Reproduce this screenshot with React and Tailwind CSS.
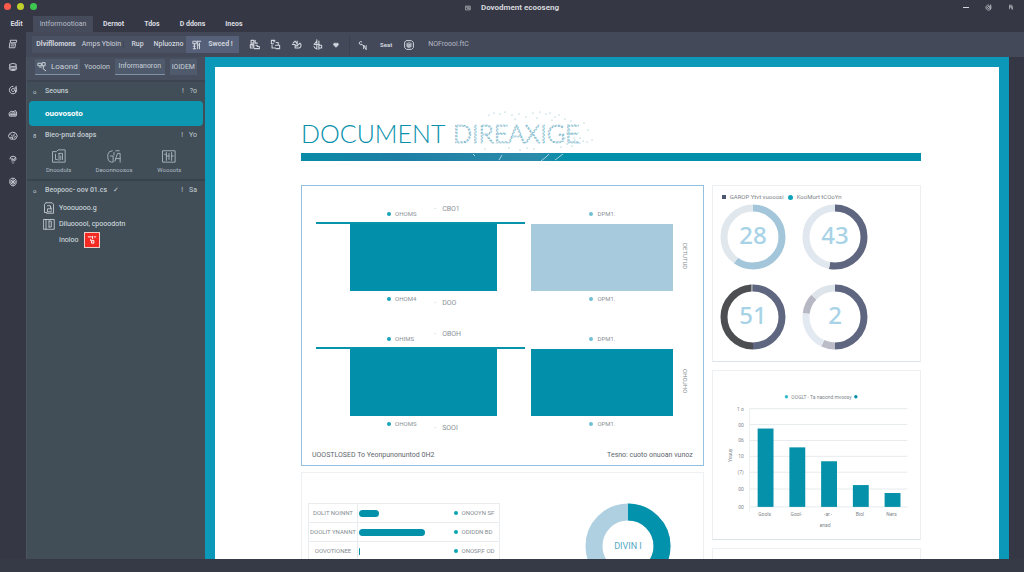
import React from "react";
import { Heart } from "lucide-react";

const menus = ["Dernot", "Tdos", "D ddons", "Ineos"];

// every glyph is drawn on a 16 x 16 grid
const glyphs = {
  notes: "M4 2h10l-1 4H5zM3 6l-1 8h9l1-6M5 8h6M5 11h4",
  data: "M3 3.500q5-2.500 10 0v3q-5 2-10 0zM3 7v5.500q5 2.500 10 0V7M2 9.500h12M6 12h5",
  target: "M8 2a6 6 0 1 0 5 2.500M13 2v3h-3M8 5.500a2.500 2.500 0 1 0 .1 0M12 8v4",
  media: "M2 8l3-3 3 1 4-2 2 4-1 5H3zM5 8v4M8 7v5M11 7v5M3 10h10",
  palette: "M3 4l4-2 5 1 3 5-3 5H4L1 9zM5 6l2 2M10 5l-1 3M4 10h3M10 10l2-1M7 12v-2",
  places: "M3 8a5 4.500 0 1 1 10 0q-1 3-4 3H6M6 7h1M10 7h1M6 9h4M7 14l1 1 1-1",
  settings: "M6 2h4l3 3v5l-3 4H6L3 10V5zM5 5l6 6M11 5l-6 6M8 3v10M4 8h8",
  frame: "M2 2h5v4H2zM9 2h5M9 2v12M12 5v9M4 6v8M2 10h3M2 14h4M9 8h3",
  shapes: "M3 2h4v4H3zM9 2v4h3M2 8h5v5H2zM4 10h2M10 9h2v2h3v3h-5M8 14h1",
  folder: "M2 2h5M2 2v5h3M3 9v4h5M9 5h3v3M8 9h6v5H9M5 4h2",
  camera: "M3 6l3-3 2 3M2 8h4v5h6a4 4 0 0 0 1-7l-2 2M9 3v6M6 10h4",
  anchor: "M7 1v14M7 3L3 8h8M10 3v6h4v4h-4M3 11q1 3 4 3M10 9v6",
  connect: "M6 3a2.500 2.500 0 1 0 0 4M5 7l6 3M9 14V9M13 9v6M9 9l4 6",
  account: "M4 1h8l3 3v8l-3 3H4l-3-3V4zM8 4v8M5 5v6h6V5M5 8h6",
  board: "M1 3h4l2-2h8v14H1zM4 6v6h2M8 5v8M8 5h4v7M10 8v4",
  pictures: "M6 2Q2 2 1 6v5q1 4 4 4h2V8H4M9 14l3-9h3v10M10 11h5M10 2h4M8 4v3",
  table: "M1 2h14v13H1zM5 4v9M5 8h3M8 5v7M11 4v9M11 8h2M3 6h1",
  loaond: "M2 2h5v4H2zM9 1h4v5H9zM4 8h3M10 7v4l4 3",
  report: "M4 1h8l2 2v12H5M4 1L2 3v11h3M6 5h4v4H6v4h5M11 8v3",
  book: "M1 2h14v13H1zM4 2v13M8 4v8M8 4h3v8H8",
  badge: "M2 3h5M9 2v4M12 3h2M8 9h3v4H8zM6 7v2",
  window: "M2 3h12v10H2zM4 6h7M6 9h6",
  person: "M4 3v10M4 8h8M10 3v10M12 10v4M7 3v3",
};

const Glyph = ({ name, className = "w-2.5 h-2.5", thin }) => (
  <svg
    viewBox="0 0 16 16"
    className={className}
    fill="none"
    stroke="currentColor"
    strokeWidth={thin ? 1 : 1.6}
    strokeLinecap="round"
    strokeLinejoin="round"
    aria-hidden="true"
  >
    <path d={glyphs[name]} />
  </svg>
);

const railItems = ["notes", "data", "target", "media", "palette", "places", "settings"];

const toolItems = ["shapes", "folder", "camera", "anchor"];

const panels = [
  { label: "Dnoodols", icon: "board" },
  { label: "Deoonnoosos", icon: "pictures" },
  { label: "Woooots", icon: "table" },
];

const donuts = [
  { value: "28", parts: [[0, 60, "#a3c6da"], [60, 40, "#e0e8ee"]] },
  { value: "43", parts: [[0, 53, "#5f6680"], [53, 47, "#e0e7ee"]] },
  {
    value: "51",
    parts: [[0, 50, "#5f6680"], [50, 49, "#4c4e51"], [99, 1, "#8f939e"]],
  },
  {
    value: "2",
    parts: [
      [0, 50, "#5f6680"],
      [50, 7, "#bcbcc9"],
      [57, 20, "#e3e9f0"],
      [77, 10, "#b7b8c3"],
      [87, 13, "#dde4ea"],
    ],
  },
];

const bars = [
  { x: 45, h: 79, label: "Gools" },
  { x: 77, h: 60, label: "Gool-" },
  { x: 109, h: 46, label: "-ar.-" },
  { x: 141, h: 22, label: "Biol" },
  { x: 173, h: 14, label: "Ners" },
];

const gridLines = [
  { y: 38, label: "1 o" },
  { y: 54, label: "00" },
  { y: 70, label: "06" },
  { y: 86, label: "10" },
  { y: 102, label: "(7)" },
  { y: 119, label: "00" },
  { y: 137, label: "00" },
];

const rows = [
  { name: "DOLIT NOINNT", width: "w-5", status: "ONOOYN SF" },
  { name: "DOOLIT YNANNT", width: "w-[66px]", status: "ODIDDN BD" },
  { name: "OOVOTIONEE", width: "w-px", status: "ONOSP,F OD" },
];

// [x, y] of the specks that drift off the heading
const specks = [
  [40, 4], [45, 2], [51, 3], [56, 1], [63, 4], [70, 3], [77, 6], [84, 2],
  [91, 1], [97, 3], [101, 2], [106, 6], [110, 4], [116, 8], [122, 10],
  [126, 14], [121, 19], [129, 22], [134, 30], [138, 31], [143, 29],
  [128, 32], [123, 35], [118, 33], [112, 36], [85, 38], [78, 37],
  [71, 39], [60, 37], [139, 19], [135, 12], [131, 27], [36, 38],
  [125, 27], [119, 14], [66, 8], [88, 7], [103, 9], [120, 31],
  [124, 31], [126, 29], [131, 32], [118, 22], [122, 23], [116, 27],
];

const TitleBar = () => (
  <header className="grid grid-cols-3 items-center h-4 px-1 text-[#d5d6dc] shrink-0">
    <div className="flex gap-1.5 -mt-1">
      <button aria-label="Close" className="w-[7px] h-[7px] rounded-sm bg-[#ff5b4d]" />
      <button aria-label="Minimise" className="w-[7px] h-[7px] rounded-sm bg-[#bfd02c]" />
      <button aria-label="Zoom" className="w-[7px] h-[7px] rounded-sm bg-[#3fc850]" />
    </div>
    <div className="flex items-center justify-center gap-2.5">
      <Glyph name="window" className="w-1.5 h-1.5" />
      <h1 className="text-[8px] font-bold leading-none">Dovodment ecooseng</h1>
    </div>
    <div className="flex items-center justify-end gap-4 pr-1.5 -mt-0.5">
      <span className="w-1.5 h-px bg-[#d5d6dc]" />
      <Glyph name="target" className="w-[7px] h-[7px]" />
      <Glyph name="person" className="w-1.5 h-1.5" />
    </div>
  </header>
);

const MenuBar = () => (
  <nav className="flex items-center h-4 text-[7px] font-bold text-[#dcdde2] shrink-0">
    <button className="w-[33px]">Edit</button>
    <button className="w-[60px] h-4 bg-[#454b5b] font-normal text-[#b9bdc8]">
      Intformootioan
    </button>
    <div className="flex gap-5 pl-2.5">
      {menus.map((menu) => (
        <button key={menu}>{menu}</button>
      ))}
    </div>
  </nav>
);

const Toolbar = () => (
  <div className="flex items-center h-[25px] pl-1.5 bg-[#444959] text-[7px] text-[#d0d4dc] shrink-0">
    <div className="flex items-center h-[17px] bg-[#4a5163]">
      <button className="w-[48px] font-bold">Dlvifllomons</button>
      <button className="w-[43px]">Amps Ybloin</button>
      <button className="w-7 border-l border-[#414757] font-medium">Rup</button>
      <button className="w-[35px] font-medium">Npluozno</button>
      <button className="flex items-center justify-center gap-1.5 w-[53px] h-[17px] bg-[#566078] font-bold">
        <Glyph name="frame" />
        Swced !
      </button>
    </div>
    <div className="flex items-center gap-2.5 pl-2.5 pr-2.5">
      {toolItems.map((name) => (
        <button key={name} aria-label={name}>
          <Glyph name={name} className="w-[11px] h-[11px]" />
        </button>
      ))}
      <button aria-label="favourite">
        <Heart size={6} fill="currentColor" />
      </button>
    </div>
    <div className="flex items-center gap-3 h-5 pl-2 border-l border-[#3c4150]">
      <button aria-label="connect">
        <Glyph name="connect" />
      </button>
      <button className="text-[6px] font-bold">Seat</button>
      <button aria-label="account">
        <Glyph name="account" />
      </button>
    </div>
    <a href="#norroool" className="pl-3.5 text-[#b5bac5]">
      NOFroool.ftC
    </a>
  </div>
);

const SectionHead = ({ mark, title, action }) => (
  <div className="flex items-center h-[19px] pl-[6px] pr-2 text-[7px] text-[#c3cdd3]">
    <span className="w-3 text-[6px]">{mark}</span>
    <h2 className="flex-1 font-medium">{title}</h2>
    <span className="pr-1.5">!</span>
    <span>{action}</span>
  </div>
);

const Sidebar = () => (
  <aside className="flex flex-col w-[179px] shrink-0 bg-[#414d57] border-l border-[#4b5461] text-[7px] text-[#c9d2d8]">
    <div className="flex items-start justify-between h-[25px] px-2 pt-0.5 bg-[#474e5d] border-b-2 border-[#3c4551]">
      <button className="flex items-center gap-1 h-4 px-0.5 border-b border-[#8090a5] bg-[#505a6d] text-[8px]">
        <Glyph name="loaond" />
        Loaond
      </button>
      <button className="h-4">Yoooion</button>
      <button className="h-4 px-1 border-b border-[#8090a5] bg-[#505a6d]">Informanoron</button>
      <button className="h-4 px-0.5 bg-[#505a6d]">IOIDEM</button>
    </div>
    <SectionHead mark="o" title="Seouns" action="?o" />
    <button className="h-[25px] mx-0.5 pl-4 rounded-sm bg-[#0d96b0] text-left text-[8px] font-bold text-white">
      ouovosoto
    </button>
    <SectionHead mark="8" title="Bieo-pnut doaps" action="Yo" />
    <div className="grid grid-cols-3 h-[34px] pl-1 pr-2 pt-1">
      {panels.map(({ label, icon }) => (
        <button key={label} className="flex flex-col items-center gap-1 text-[6px] text-[#b0bdc5]">
          <Glyph name={icon} className="w-3.5 h-3.5" thin />
          {label}
        </button>
      ))}
    </div>
    <div className="border-t-2 border-[#37434d]">
      <SectionHead
        mark="o"
        title={
          <>
            Beopooc- oov 01.cs <span className="pl-1">✓</span>
          </>
        }
        action="Sa"
      />
    </div>
    <ul className="pl-4 text-[#dde3e7]">
      <li className="flex items-center gap-1 h-4">
        <Glyph name="report" className="w-3 h-3" thin />
        Yooouooo.g
      </li>
      <li className="flex items-center gap-1 h-4">
        <Glyph name="book" className="w-3 h-3" thin />
        Diluooool, cpooodotn
      </li>
      <li className="flex items-center gap-1.5 h-4 pl-4">
        Inoloo
        <span className="flex items-center justify-center w-4 h-4 border border-[#f3cfc6] bg-[#f52a22] text-white">
          <Glyph name="badge" />
        </span>
      </li>
    </ul>
  </aside>
);

const Legend = ({ className, dot, label, extra, low }) => (
  <div className={`grid items-center h-4 text-[6px] text-[#8b9197] ${className}`}>
    <span className="col-start-2 flex items-center gap-1">
      <i className={`w-1 h-1 rounded-full ${dot}`} />
      {label}
    </span>
    {extra && (
      <span className={`flex gap-1.5 text-[7px] leading-none ${low ? "self-end" : "self-start"}`}>
        <span className="text-[#b9dbe4]">-</span>
        {extra}
      </span>
    )}
  </div>
);

const ChartRow = ({ labels, fill, side }) => (
  <div className="grid grid-cols-[209fr_141fr_16fr] gap-x-1.5">
    <div>
      <Legend className="grid-cols-[71fr_47fr_91fr]" dot="bg-[#16a4b8]" label={labels[0]} extra={labels[1]} />
      <div className="pl-[34px] pr-7 h-[69px] border-t-2 border-[#0793ac]">
        <div className="h-full bg-[#018fa9]" />
      </div>
      <Legend className="grid-cols-[71fr_47fr_91fr]" dot="bg-[#16a4b8]" label={labels[2]} extra={labels[3]} low />
    </div>
    <div>
      <Legend className="grid-cols-[58fr_83fr]" dot="bg-[#6fc0d2]" label="DPM1." />
      <div className={fill} />
      <Legend className="grid-cols-[58fr_83fr]" dot="bg-[#6fc0d2]" label="OPM1." />
    </div>
    <div className="flex items-center">
      <span className="[writing-mode:vertical-rl] text-[6px] leading-3 text-[#81888e]">{side}</span>
    </div>
  </div>
);

const Donut = ({ value, parts }) => (
  <svg viewBox="0 0 66 66" className="w-[66px] h-[66px]" role="img" aria-label={value}>
    {parts.map(([start, size, color]) => (
      <circle
        key={start}
        cx="33"
        cy="33"
        r="29"
        fill="none"
        stroke={color}
        strokeWidth="7"
        pathLength="100"
        strokeDasharray={`${size} ${100 - size}`}
        strokeDashoffset={-start}
        transform="rotate(-90 33 33)"
      />
    ))}
    <text x="33" y="40" textAnchor="middle" fontSize="24" fontWeight="500" fill="#a8d3e7" fontFamily="Noto Sans, sans-serif">
      {value}
    </text>
  </svg>
);

const BarChart = () => (
  <svg viewBox="0 0 209 169" className="block w-full" fontSize="5" fill="#7d858b" role="img" aria-label="Bar chart">
    <circle cx="74" cy="26" r="1.7" fill="#35bccb" />
    <text x="79" y="28">
      OOGLT - Ta naoond mvoosy
    </text>
    <circle cx="144" cy="26" r="1.7" fill="#018fa9" />
    {gridLines.map(({ y, label }) => (
      <g key={y}>
        <line x1="37" x2="196" y1={y} y2={y} stroke="#e6ebee" />
        <text x="31" y={y + 2} textAnchor="end">
          {label}
        </text>
      </g>
    ))}
    <line x1="37" x2="37" y1="38" y2="142" stroke="#eceff1" />
    {bars.map(({ x, h, label }) => (
      <g key={label}>
        <rect x={x} y={137 - h} width="16" height={h} fill="#0491a9" />
        <text x={x + 7} y="146" textAnchor="middle">
          {label}
        </text>
      </g>
    ))}
    <text x="113" y="157" textAnchor="middle">
      enad
    </text>
    <text transform="translate(19 85) rotate(-90)" textAnchor="middle">
      Youuy
    </text>
  </svg>
);

const Heading = () => (
  <div>
    <div className="flex items-start h-[42px] text-[#078fab]">
      <h2 className="pt-1.5 text-[25px] leading-8 font-light font-[Lato,sans-serif]">DOCUMENT</h2>
      <svg viewBox="0 0 140 42" className="w-[140px] h-[42px] ml-1 overflow-visible" role="img" aria-label="DIREAXIGE">
        <text
          x="4"
          y="32"
          fontSize="25"
          fontFamily="Lato, sans-serif"
          fontWeight="300"
          fill="#c3dfe9"
          fillOpacity="0.4"
          stroke="#68adc5"
          strokeWidth="0.7"
          strokeDasharray="2 1.3"
        >
          DIREAXIGE
        </text>
        {specks.map(([x, y]) => (
          <circle key={`${x}-${y}`} cx={x} cy={y} r="0.6" fill="#7fb8cb" />
        ))}
      </svg>
    </div>
    <svg viewBox="0 0 620 8" preserveAspectRatio="none" className="block w-full h-2">
      <defs>
        <linearGradient id="rule">
          <stop offset="0" stopColor="#0a8ba8" />
          <stop offset="0.15" stopColor="#1e7fa5" />
          <stop offset="0.38" stopColor="#2b8baa" />
          <stop offset="0.43" stopColor="#018fa9" />
        </linearGradient>
      </defs>
      <rect width="620" height="8" fill="url(#rule)" />
      <path d="M240 8l5-4 3-3M198 7l3-5M172 1l2 2M254 7l8-6" stroke="#a7d2df" fill="none" />
    </svg>
  </div>
);

const App = () => {
  return (
    <div className="flex flex-col h-screen overflow-hidden bg-[#353744] font-[Roboto,sans-serif] leading-none">
      <TitleBar />
      <MenuBar />
      <div className="flex flex-1 min-h-0">
        <nav className="flex flex-col items-center gap-[13px] w-[26px] pt-[7px] shrink-0 text-[#c2c5ce]">
          {railItems.map((name) => (
            <button key={name} aria-label={name}>
              <Glyph name={name} />
            </button>
          ))}
        </nav>
        <div className="flex flex-col flex-1 min-w-0">
          <Toolbar />
          <div className="flex flex-1 min-h-0">
            <Sidebar />
            <main className="flex-1 min-w-0 mr-[15px] overflow-hidden border-10 border-b-0 border-[#0c98b8] bg-white pl-[86px] pr-[78px] pt-11">
              <Heading />
              <div className="grid grid-cols-[402fr_209fr] gap-x-2 mt-6">
                <div className="flex flex-col gap-1.5">
                  <section className="pt-5 pb-1.5 border border-[#94c0e0]">
                    <div className="flex flex-col gap-6 pl-3.5 pr-2">
                      <ChartRow
                        labels={["OHOMS", "CBO1", "OHOM4", "DOO"]}
                        fill="h-[69px] bg-[#a7cbdd] border-t-2 border-white"
                        side="DETUTUD"
                      />
                      <ChartRow
                        labels={["OHIMS", "OBOH", "OHOMS", "SOOI"]}
                        fill="h-[69px] bg-[#018fa9] border-t-2 border-white"
                        side="OHOJHO"
                      />
                    </div>
                    <div className="flex justify-between pt-5 px-2.5 text-[7px] text-[#5e666c]">
                      <p>UOOSTLOSED To Yeonpunonuntod 0H2</p>
                      <p>Tesno: cuoto onuoan vunoz</p>
                    </div>
                  </section>
                  <section className="flex items-start justify-between pt-[30px] pl-1.5 pr-8 border border-[#eef1f3]">
                    <table className="text-[6px] text-[#858d93] border border-[#e9edef]">
                      <tbody>
                        {rows.map((row) => (
                          <tr key={row.name} className="h-[19px] border-b border-[#e9edef]">
                            <th className="w-[49px] font-normal border-r border-[#e9edef] whitespace-nowrap">
                              {row.name}
                            </th>
                            <td className="w-24 pl-px">
                              <div className={`h-[7px] rounded-sm bg-[#0392aa] ${row.width}`} />
                            </td>
                            <td className="w-[46px] whitespace-nowrap">
                              <i className="inline-block w-1 h-1 mr-1 rounded-full bg-[#08a5b2]" />
                              {row.status}
                            </td>
                          </tr>
                        ))}
                      </tbody>
                    </table>
                    <svg viewBox="0 0 86 86" className="w-[86px] h-[86px]" role="img" aria-label="Division">
                      <circle cx="43" cy="43" r="34" fill="none" stroke="#afd0e1" strokeWidth="17" />
                      <path d="M43 9a34 34 0 0 1 0 68" fill="none" stroke="#0292ab" strokeWidth="17" />
                      <text x="43" y="46" textAnchor="middle" fontSize="9" fill="#55a9c4">
                        DIVIN I
                      </text>
                    </svg>
                  </section>
                </div>
                <div className="flex flex-col gap-2">
                  <section className="h-[177px] pl-[7px] pt-2 border border-[#edf0f2] border-b-[#dde4e8]">
                    <div className="flex items-center gap-1 pl-0.5 mb-1 text-[6px] text-[#7b8289]">
                      <i className="w-1 h-1 bg-[#4d5872]" />
                      <span>GAROP Ytvt vuooosi</span>
                      <i className="w-[5px] h-[5px] rounded-full bg-[#0da1ba]" />
                      <span>KooMurt tCOoYn</span>
                    </div>
                    <div className="flex flex-wrap gap-x-4 gap-y-3.5">
                      {donuts.map((donut) => (
                        <Donut key={donut.value} {...donut} />
                      ))}
                    </div>
                  </section>
                  <section className="border border-[#edf0f2] border-b-[#dde4e8]">
                    <BarChart />
                  </section>
                  <section className="h-10 border border-[#edf0f2]" />
                </div>
              </div>
            </main>
          </div>
        </div>
      </div>
      <footer className="h-[13px] shrink-0 bg-[#363a46]" />
    </div>
  );
};

export default App;
